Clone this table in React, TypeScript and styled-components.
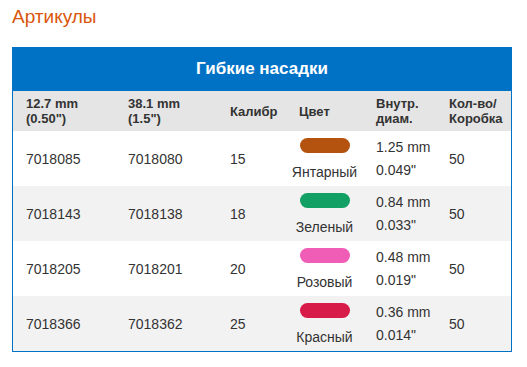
import React from 'react'
import styled, { createGlobalStyle } from 'styled-components'

type Row = {
  a: string
  b: string
  gauge: string
  color: string
  colorName: string
  mm: string
  inch: string
  qty: string
}

const rows: Row[] = [
  { a: '7018085', b: '7018080', gauge: '15', color: '#b4520f', colorName: 'Янтарный', mm: '1.25 mm', inch: '0.049"', qty: '50' },
  { a: '7018143', b: '7018138', gauge: '18', color: '#12a064', colorName: 'Зеленый', mm: '0.84 mm', inch: '0.033"', qty: '50' },
  { a: '7018205', b: '7018201', gauge: '20', color: '#f05db6', colorName: 'Розовый', mm: '0.48 mm', inch: '0.019"', qty: '50' },
  { a: '7018366', b: '7018362', gauge: '25', color: '#d81c49', colorName: 'Красный', mm: '0.36 mm', inch: '0.014"', qty: '50' },
]

const columns = '102px 102px 69px 77px 73px 1fr'

export default function App() {
  return (
    <>
      <GlobalStyle />
      <Page>
        <Title>Артикулы</Title>
        <Table>
          <Caption>Гибкие насадки</Caption>
          <HeadRow>
            <HeadCell>12.7 mm<br />(0.50")</HeadCell>
            <HeadCell>38.1 mm<br />(1.5")</HeadCell>
            <HeadCell>Калибр</HeadCell>
            <HeadCell>Цвет</HeadCell>
            <HeadCell>Внутр.<br />диам.</HeadCell>
            <HeadCell>Кол-во/<br />Коробка</HeadCell>
          </HeadRow>
          {rows.map((r, i) => (
            <BodyRow key={r.a} $striped={i % 2 === 1}>
              <Cell>{r.a}</Cell>
              <Cell>{r.b}</Cell>
              <Cell>{r.gauge}</Cell>
              <ColorCell>
                <Pill $color={r.color} />
                <ColorName>{r.colorName}</ColorName>
              </ColorCell>
              <DiamCell>
                <span>{r.mm}</span>
                <span>{r.inch}</span>
              </DiamCell>
              <Cell>{r.qty}</Cell>
            </BodyRow>
          ))}
        </Table>
      </Page>
    </>
  )
}

const GlobalStyle = createGlobalStyle`
  body {
    margin: 0;
    background: #fff;
    font-family: "Liberation Sans", Arial, sans-serif;
  }
`
const Page = styled.div`
  padding: 6px 15px 0 12px;
  width: 500px;
`
const Title = styled.h2`
  margin: 0 0 19px;
  font-size: 19px;
  font-weight: normal;
  line-height: 22px;
  color: #d9560c;
`
const Table = styled.div`
  border: 1px solid #0072c6;
  border-top: none;
`
const Caption = styled.div`
  height: 44px;
  margin: 0 -1px;
  background: #0072c6;
  color: #fff;
  font-size: 17px;
  font-weight: bold;
  display: flex;
  align-items: center;
  justify-content: center;
`
const HeadRow = styled.div`
  display: grid;
  grid-template-columns: ${columns};
  height: 40px;
  background: #e5e5e5;
  align-items: center;
`
const HeadCell = styled.div`
  padding-left: 13px;
  font-size: 13px;
  font-weight: bold;
  line-height: 15px;
  color: #333;
`
const BodyRow = styled.div<{ $striped: boolean }>`
  display: grid;
  grid-template-columns: ${columns};
  height: 55px;
  align-items: center;
  background: ${(p) => (p.$striped ? '#f2f2f2' : '#fff')};
`
const Cell = styled.div`
  padding-left: 13px;
  font-size: 14px;
  color: #333;
`
const ColorCell = styled.div`
  display: flex;
  flex-direction: column;
  align-items: center;
  font-size: 14px;
  color: #333;
`
const Pill = styled.div<{ $color: string }>`
  width: 50px;
  height: 15px;
  border-radius: 8px;
  background: ${(p) => p.$color};
  margin-bottom: 11px;
`
const ColorName = styled.span`
  line-height: 16px;
`
const DiamCell = styled.div`
  padding-left: 13px;
  display: flex;
  flex-direction: column;
  font-size: 14px;
  line-height: 23px;
  color: #333;
`
